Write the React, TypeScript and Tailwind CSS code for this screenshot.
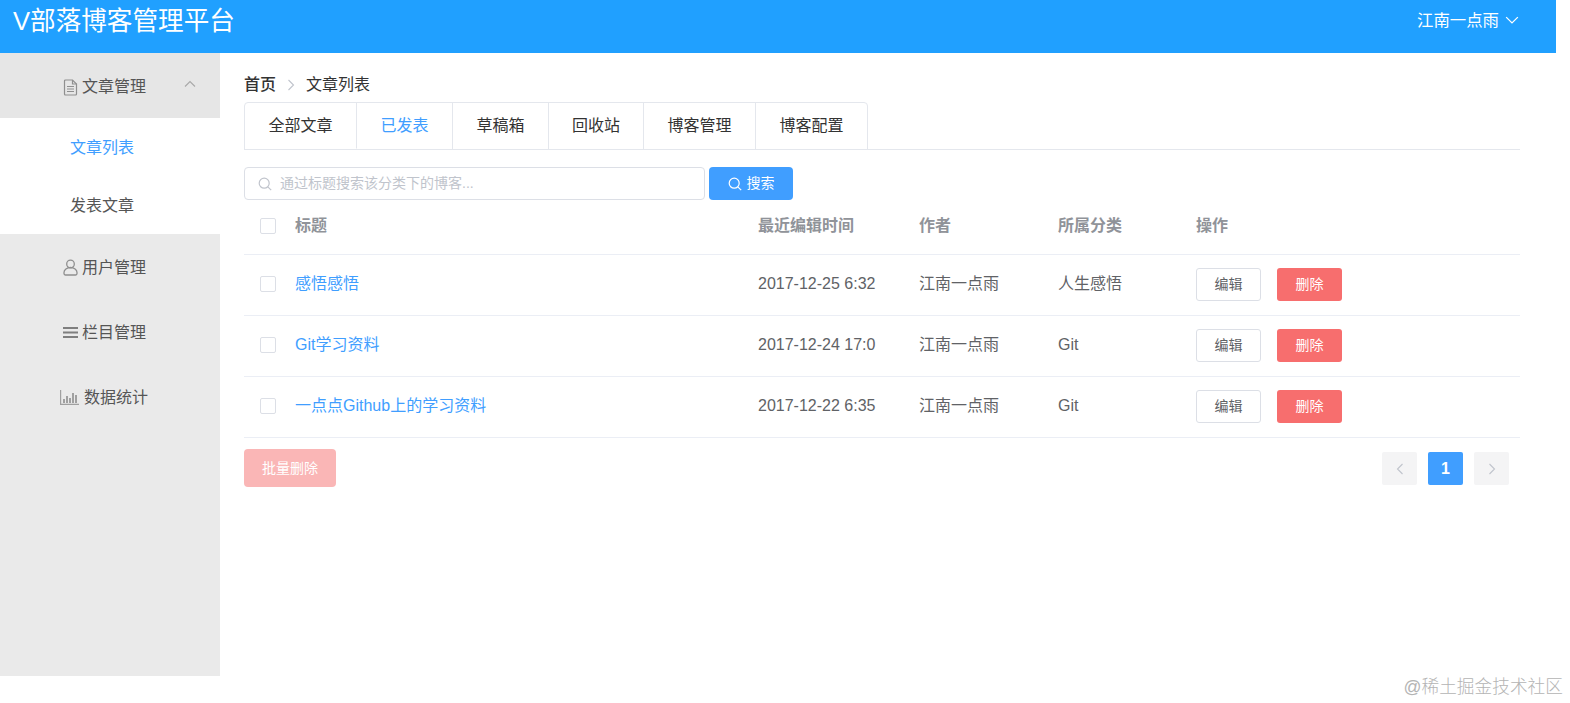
import React from "react";

const FONT = "[font-family:'Liberation_Sans','Noto_Sans_CJK_SC',sans-serif]";

const DocIcon = () => (
  <svg width="15" height="17" viewBox="0 0 15 17" fill="none" stroke="#8f8f8f" strokeWidth="1.2">
    <path d="M1.5 2a1 1 0 0 1 1-1h7l4 4v10a1 1 0 0 1-1 1h-10a1 1 0 0 1-1-1z" />
    <path d="M9.5 1v4h4M4 7.5h7M4 10h7M4 12.5h7" />
  </svg>
);
const UserIcon = () => (
  <svg width="15" height="17" viewBox="0 0 15 17" fill="none" stroke="#8f8f8f" strokeWidth="1.3">
    <circle cx="7.5" cy="5" r="3.8" />
    <path d="M1 13.5a6.5 5 0 0 1 13 0v1a1.5 1.5 0 0 1-1.5 1.5h-10a1.5 1.5 0 0 1-1.5-1.5z" />
  </svg>
);
const MenuIcon = () => (
  <svg width="15" height="13" viewBox="0 0 15 13" fill="none" stroke="#7f7f7f" strokeWidth="1.8">
    <path d="M0 2h15M0 6.5h15M0 11h15" />
  </svg>
);
const ChartIcon = () => (
  <svg width="19" height="15" viewBox="0 0 19 15" fill="none" stroke="#a0a0a0" strokeWidth="1.2">
    <path d="M.6 0v14.4h18.4" />
    <path d="M4 13V9M7 13V6M10 13V8M13 13V3M16 13V5" strokeWidth="2" />
  </svg>
);
const SearchIcon = ({ color, size = 14 }: { color: string; size?: number }) => (
  <svg width={size} height={size} viewBox="0 0 14 14" fill="none" stroke={color} strokeWidth="1.2">
    <circle cx="6.2" cy="6.2" r="5" />
    <path d="M9.8 9.8l3.4 3.4" />
  </svg>
);
const Chevron = ({ dir, color, size = 12 }: { dir: "up" | "down" | "left" | "right"; color: string; size?: number }) => {
  const d = {
    up: "M1 8.5L6 3.5l5 5",
    down: "M1 3.5l5 5 5-5",
    left: "M8.5 1L3.5 6l5 5",
    right: "M3.5 1l5 5-5 5",
  }[dir];
  return (
    <svg width={size} height={size} viewBox="0 0 12 12" fill="none" stroke={color} strokeWidth="1.1">
      <path d={d} />
    </svg>
  );
};

const Checkbox = () => <span className="block size-4 rounded-[2px] border border-[#dcdfe6] bg-white" />;

const tabs = [
  { label: "全部文章", w: "w-[111px]" },
  { label: "已发表", w: "w-[96px]", active: true },
  { label: "草稿箱", w: "w-[96px]" },
  { label: "回收站", w: "w-[95px]" },
  { label: "博客管理", w: "w-[112px]" },
  { label: "博客配置", w: "w-[112px]" },
];

const rows = [
  { title: "感悟感悟", time: "2017-12-25 6:32", cat: "人生感悟" },
  { title: "Git学习资料", time: "2017-12-24 17:0", cat: "Git" },
  { title: "一点点Github上的学习资料", time: "2017-12-22 6:35", cat: "Git" },
];

const GRID = "grid grid-cols-[51px_463px_161px_139px_138px_1fr] items-center";

function NavItem({ icon, label, gap = "gap-[5px]", pl = "pl-[63px]" }: { icon: React.ReactNode; label: string; gap?: string; pl?: string }) {
  return (
    <div className={`flex h-[65px] items-center pt-[2px] ${gap} ${pl} text-[16px]`}>
      <span className="flex items-center">{icon}</span>
      <span className="text-[#555]">{label}</span>
    </div>
  );
}

export default function App() {
  return (
    <div className={`relative h-[703px] w-[1570px] overflow-hidden bg-white ${FONT}`}>
      <header className="flex h-[53px] w-[1556px] items-start justify-between bg-[#20a0ff] text-white">
        <div className="pl-[13px] pt-[6px] text-[25.6px] leading-[30px]">V部落博客管理平台</div>
        <div className="flex items-center gap-[6px] pr-[37px] pt-[10px] text-[16.4px] leading-[20px]">
          <span>江南一点雨</span>
          <Chevron dir="down" color="#ffffff" size={14} />
        </div>
      </header>

      <div className="flex">
        <aside className="h-[623px] w-[220px] shrink-0 bg-[#eaeaea]">
          <div className="flex h-[65px] items-center bg-[#e6e6e6] pl-[63px] pr-[24px] pt-[3px] text-[16px] text-[#555]">
            <DocIcon />
            <span className="ml-[4px]">文章管理</span>
            <span className="ml-auto -translate-y-[3px]">
              <Chevron dir="up" color="#a8a8a8" />
            </span>
          </div>
          <div className="bg-white pl-[70px] pt-[1px] text-[16px]">
            <div className="flex h-[58px] items-center text-[#409eff]">文章列表</div>
            <div className="flex h-[57px] items-center text-[#555]">发表文章</div>
          </div>
          <NavItem icon={<UserIcon />} label="用户管理" gap="gap-[4px]" />
          <NavItem icon={<MenuIcon />} label="栏目管理" gap="gap-[4px]" />
          <NavItem icon={<ChartIcon />} label="数据统计" gap="gap-[5px]" pl="pl-[60px]" />
        </aside>

        <main className="w-[1300px] pl-[24px] pr-[2px] pt-[24px]">
          <nav className="flex h-[16px] items-center text-[16px] leading-[16px] text-[#333]">
            <span className="font-medium">首页</span>
            <span className="mx-[9px]">
              <Chevron dir="right" color="#c0c4cc" size={12} />
            </span>
            <span>文章列表</span>
          </nav>

          <div className="mt-[9px] flex w-[1276px] border-b border-[#e4e7ed]">
            <div className="-mb-px flex rounded-t-[4px] border border-[#e4e7ed]">
              {tabs.map((t, i) => (
                <div
                  key={t.label}
                  className={`flex h-[46px] items-center justify-center text-[16px] ${t.w} ${i > 0 ? "border-l border-[#e4e7ed]" : ""} ${
                    t.active ? "border-b border-b-white text-[#409eff]" : "text-[#333]"
                  }`}
                >
                  {t.label}
                </div>
              ))}
            </div>
          </div>

          <div className="mt-[17px] flex gap-[4px]">
            <div className="flex h-[33px] w-[461px] items-center gap-[8px] rounded-[4px] border border-[#dcdfe6] pl-[13px] text-[14px] text-[#c0c4cc]">
              <SearchIcon color="#c0c4cc" />
              <span>通过标题搜索该分类下的博客...</span>
            </div>
            <div className="flex h-[33px] w-[84px] items-center justify-center gap-[5px] rounded-[4px] bg-[#409eff] text-[14px] text-white">
              <SearchIcon color="#ffffff" />
              <span>搜索</span>
            </div>
          </div>

          <div className="w-[1276px]">
            <div className={`${GRID} h-[55px] border-b border-[#ebeef5] pb-[3px] text-[16px] font-bold text-[#909399]`}>
              <span className="pl-[16px]"><Checkbox /></span>
              <span>标题</span>
              <span>最近编辑时间</span>
              <span>作者</span>
              <span>所属分类</span>
              <span>操作</span>
            </div>
            {rows.map((r) => (
              <div key={r.title} className={`${GRID} h-[61px] border-b border-[#ebeef5] pb-[2px] text-[16px] text-[#606266]`}>
                <span className="pl-[16px]"><Checkbox /></span>
                <span className="text-[#409eff]">{r.title}</span>
                <span>{r.time}</span>
                <span>江南一点雨</span>
                <span>{r.cat}</span>
                <div className="flex gap-[16px] text-[14px]">
                  <span className="flex h-[33px] w-[65px] items-center justify-center rounded-[3px] border border-[#dcdfe6] text-[#606266]">编辑</span>
                  <span className="flex h-[33px] w-[65px] items-center justify-center rounded-[3px] bg-[#f76e6e] text-white">删除</span>
                </div>
              </div>
            ))}
            <div className="mt-[11px] flex items-start justify-between pr-[11px]">
              <span className="flex h-[38px] w-[92px] items-center justify-center rounded-[4px] bg-[#fab6b6] text-[14px] text-white">批量删除</span>
              <div className="mt-[3px] flex gap-[11px]">
                <span className="flex h-[33px] w-[35px] items-center justify-center rounded-[2px] bg-[#f4f4f5]">
                  <Chevron dir="left" color="#c0c4cc" />
                </span>
                <span className="flex h-[33px] w-[35px] items-center justify-center rounded-[2px] bg-[#409eff] text-[16px] font-bold text-white">1</span>
                <span className="flex h-[33px] w-[35px] items-center justify-center rounded-[2px] bg-[#f4f4f5]">
                  <Chevron dir="right" color="#c0c4cc" />
                </span>
              </div>
            </div>
          </div>
        </main>
      </div>

      <div className="absolute bottom-[5px] right-[7px] text-[17.7px] font-light leading-[22px] text-[#b4b4b4]">@稀土掘金技术社区</div>
    </div>
  );
}
